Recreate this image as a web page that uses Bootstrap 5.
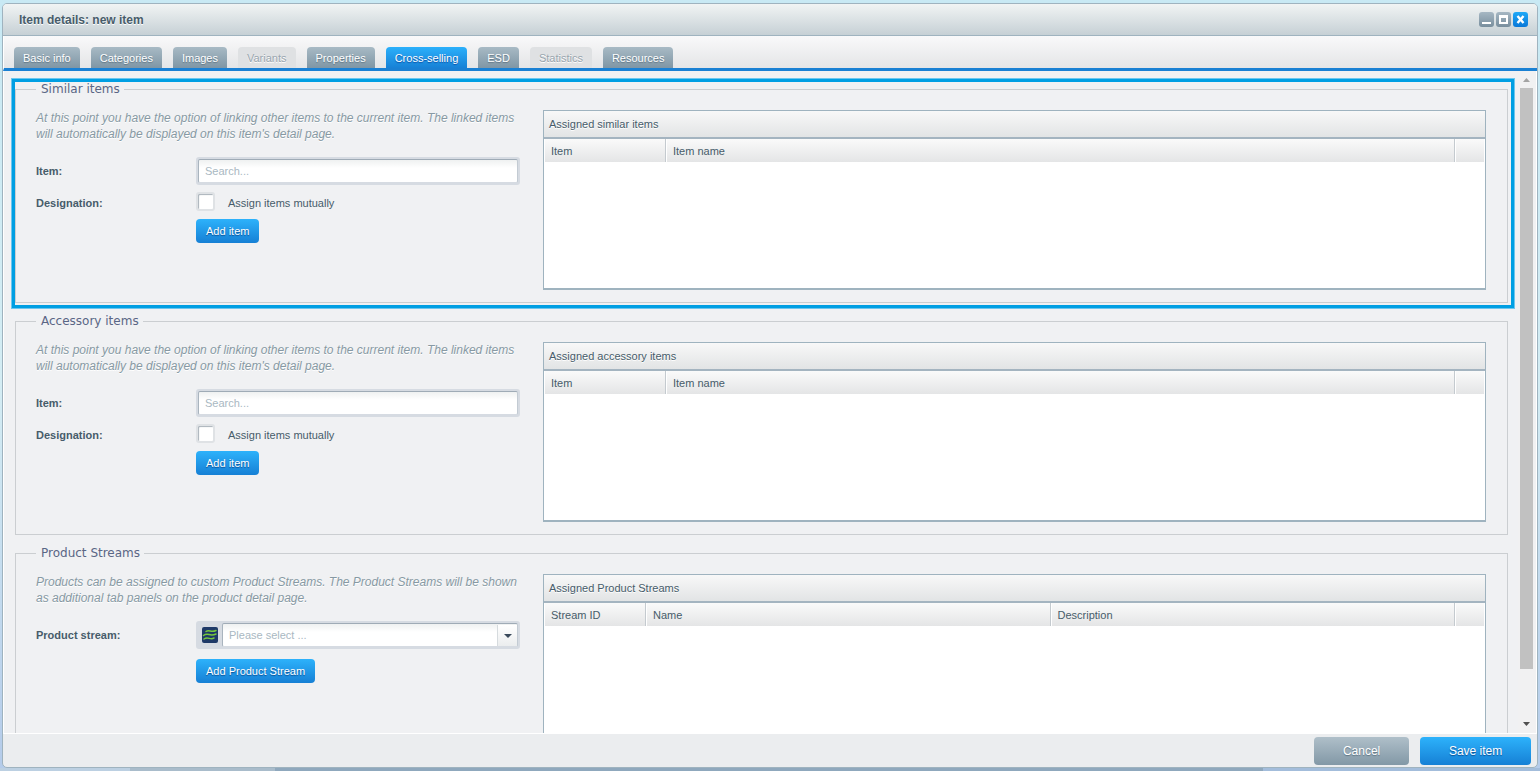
<!DOCTYPE html>
<html lang="en">
<head>
<meta charset="utf-8">
<meta name="viewport" content="width=device-width, initial-scale=1">
<title>Item details: new item</title>
<link rel="stylesheet" href="https://cdn.jsdelivr.net/npm/bootstrap@5.3.0/dist/css/bootstrap.min.css">
<style>
  body {
    font: 11px/16px "Liberation Sans", Arial, sans-serif;
    color: #475c6a;
    background: linear-gradient(#c8e9f4, #d4edf4 50%, #b4cbea);
  }
  .desktop { padding: 3px 2px; background: linear-gradient(90deg, #bcd0e2 130px, #a9bccb 130px 275px, #8fa8bd 275px 82%, #a3bddb 82%) bottom / 100% 3px no-repeat; }
  .win { border: 1px solid #9fb3bf; border-radius: 5px; background: #ebedef; }
  .win-head { height: 32px; padding: 0 9px 0 16px; background: linear-gradient(#f1f4f4, #c6d0d5); border-bottom: 1px solid #9fb3bf; }
  .win-title { font-size: 12px; line-height: 16px; text-shadow: 0 1px 0 #fff; }
  .win-tools { gap: 2px; }
  .win-btn { width: 15px; height: 15px; border: 0; border-radius: 3px; background: linear-gradient(#a6b7c3, #788e9d); }
  .win-btn svg { display: block; width: 15px; height: 15px; }
  .win-btn-close { background: linear-gradient(#1fa9f7, #0a78d8); }
  .tab-strip { height: 35px; gap: 11px; padding: 0 10px; background: linear-gradient(#f9f9fa, #e4e5e7); border-bottom: 3px solid #1a80d3; border-left: 1px solid #fff; }
  .tab-strip .nav-link { height: 21px; padding: 3px 9px 2px; line-height: 16px; border-radius: 4px 4px 0 0; color: #fff; background: linear-gradient(#a8bac5, #7f96a5); text-shadow: 0 1px 1px #5f7584; }
  .tab-strip .nav-link.active { background: linear-gradient(#2bb0fb, #1781d6); text-shadow: 0 1px 1px #0a4fa5; }
  .tab-strip .nav-link.disabled { color: #98a5ae; background: #dfe1e3; text-shadow: 0 1px 0 #fff; }
  .work { background: #f0f1f3; border: 1px solid #fff; border-top: 0; }
  .sections { padding: 10px 10px 0 11px; gap: 10px; }
  .group { border: 1px solid #cbced1; padding: 13px 21px 12px 20px; }
  .group > legend { float: none; width: auto; margin: 0; padding: 0 4px 0 5px; font: 12px/16px "DejaVu Sans", Verdana, sans-serif; color: #5a6685; }
  .group.marked::after { content: ""; position: absolute; inset: -18px -7px -6px -4px; border: 3px solid #009fe3; box-shadow: 0 0 0 1px #6cc6ee; pointer-events: none; }
  .group-body { gap: 23px; }
  .group-form { width: 484px; flex: none; }
  .hint { font-size: 12px; font-style: italic; color: #8799a3; text-shadow: 0 1px 0 #fff; margin-bottom: 15px; }
  .row-tick { margin: 7px 0 8px; }
  .row-stream { margin-bottom: 10px; }
  .field-label { width: 160px; flex: none; font-weight: 700; }
  .field { height: 28px; padding: 2px; border-radius: 3px; background: #d6dbe2; }
  .field input, .field select { height: 24px; border: 1px solid; border-color: #9fabb6 #c3cbd3 #d6dbe2 #a9b4be; border-radius: 2px; padding: 0 6px; background: linear-gradient(#eff1f1, #fff 8px); color: #a9b8c2; line-height: 16px; outline: 0; }
  .field input::placeholder { color: #a9b8c2; }
  .field select { appearance: none; }
  .stream-icon { width: 24px; }
  .drop-arrow { right: 3px; top: 4px; width: 20px; height: 21px; border-left: 1px solid #d6dbde; background: linear-gradient(#fff, #ebedee); pointer-events: none; }
  .tick { appearance: none; width: 19px; height: 19px; margin: 0 13px 0 0; border: 2px solid #dfe2e5; border-radius: 3px; background: #fff; box-shadow: inset 1px 1px 1px #a9b2ba; }
  .act { height: 24px; padding: 0 10px; border: 0; border-radius: 4px; color: #fff; font-size: 11px; line-height: 16px; background: linear-gradient(#2db2fb, #1680d5); text-shadow: 0 1px 1px #0a4f95; }
  .act-large { height: 28px; font-size: 12px; min-width: 95px; }
  .act-save { min-width: 111px; }
  .act-grey { background: linear-gradient(#afbfc9, #8298a6); text-shadow: 0 1px 1px #5f7584; }
  .panel { height: 180px; border: 1px solid #9fb3bf; border-bottom-width: 2px; background: #fff; }
  .panel-title { height: 28px; padding: 5px; line-height: 16px; background: linear-gradient(#f8f8f8, #e2e4e5); border-bottom: 2px solid #a4b4c0; text-shadow: 0 1px 0 #fff; }
  .cols { table-layout: fixed; border-collapse: separate; border-spacing: 0; }
  .cols th { height: 23px; padding: 1px 6px; font-weight: 400; background: linear-gradient(#fafafa, #e4e5e6); border-right: 1px solid #c4cacf; border-left: 1px solid #fff; }
  .cols th:last-child { width: 30px; border-right-color: #fff; }
  .c-item { width: 122px; }
  .c-id { width: 102px; }
  .scroller { width: 18px; padding: 6px 3px 6px 2px; background: #f1f1f2; }
  .scroller svg { width: 9px; height: 5px; flex: none; align-self: center; }
  .thumb { flex: 581 0 0; margin: 6px 0 0; background: #c1c1c1; }
  .track-rest { flex: 53 0 0; }
  .win-foot { height: 33px; padding: 0 6px; gap: 11px; }
</style>
</head>
<body>
<div class="desktop vh-100 d-flex">
<main class="win d-flex flex-column flex-grow-1 overflow-hidden">
  <header class="win-head d-flex align-items-center flex-shrink-0">
    <h1 class="win-title fw-bold m-0 me-auto">Item details: new item</h1>
    <div class="win-tools d-flex">
      <button class="win-btn p-0" type="button" aria-label="Minimize"><svg viewBox="0 0 15 15"><path d="M3 10h9v2H3z" fill="#fff"/></svg></button>
      <button class="win-btn p-0" type="button" aria-label="Maximize"><svg viewBox="0 0 15 15"><path d="M3 3h9v9H3zM5 6v4h5V6z" fill="#fff" fill-rule="evenodd"/></svg></button>
      <button class="win-btn win-btn-close p-0" type="button" aria-label="Close"><svg viewBox="0 0 15 15"><path d="M4.500 4l6 7M10.500 4l-6 7" stroke="#fff" stroke-width="2.400"/></svg></button>
    </div>
  </header>
  <nav class="tab-strip nav flex-nowrap align-items-end flex-shrink-0">
    <a class="nav-link" href="#">Basic info</a>
    <a class="nav-link" href="#">Categories</a>
    <a class="nav-link" href="#">Images</a>
    <a class="nav-link disabled" href="#">Variants</a>
    <a class="nav-link" href="#">Properties</a>
    <a class="nav-link active" href="#">Cross-selling</a>
    <a class="nav-link" href="#">ESD</a>
    <a class="nav-link disabled" href="#">Statistics</a>
    <a class="nav-link" href="#">Resources</a>
  </nav>
  <div class="work d-flex flex-grow-1 overflow-hidden">
    <div class="sections d-flex flex-column flex-grow-1 overflow-hidden">
      <fieldset class="group marked position-relative">
        <legend>Similar items</legend>
        <div class="group-body d-flex">
          <div class="group-form">
            <p class="hint">At this point you have the option of linking other items to the current item. The linked items will automatically be displayed on this item's detail page.</p>
            <div class="d-flex align-items-center">
              <label class="field-label" for="similar-item">Item:</label>
              <div class="field flex-grow-1"><input class="w-100" id="similar-item" type="text" placeholder="Search..."></div>
            </div>
            <div class="row-tick d-flex align-items-end">
              <span class="field-label">Designation:</span>
              <input class="tick" id="similar-mutual" type="checkbox"><label for="similar-mutual">Assign items mutually</label>
            </div>
            <div class="d-flex"><span class="field-label"></span><button class="act" type="button">Add item</button></div>
          </div>
          <section class="panel flex-grow-1">
            <div class="panel-title">Assigned similar items</div>
            <table class="cols w-100"><thead><tr><th class="c-item">Item</th><th>Item name</th><th></th></tr></thead></table>
          </section>
        </div>
      </fieldset>
      <fieldset class="group">
        <legend>Accessory items</legend>
        <div class="group-body d-flex">
          <div class="group-form">
            <p class="hint">At this point you have the option of linking other items to the current item. The linked items will automatically be displayed on this item's detail page.</p>
            <div class="d-flex align-items-center">
              <label class="field-label" for="accessory-item">Item:</label>
              <div class="field flex-grow-1"><input class="w-100" id="accessory-item" type="text" placeholder="Search..."></div>
            </div>
            <div class="row-tick d-flex align-items-end">
              <span class="field-label">Designation:</span>
              <input class="tick" id="accessory-mutual" type="checkbox"><label for="accessory-mutual">Assign items mutually</label>
            </div>
            <div class="d-flex"><span class="field-label"></span><button class="act" type="button">Add item</button></div>
          </div>
          <section class="panel flex-grow-1">
            <div class="panel-title">Assigned accessory items</div>
            <table class="cols w-100"><thead><tr><th class="c-item">Item</th><th>Item name</th><th></th></tr></thead></table>
          </section>
        </div>
      </fieldset>
      <fieldset class="group">
        <legend>Product Streams</legend>
        <div class="group-body d-flex">
          <div class="group-form">
            <p class="hint">Products can be assigned to custom Product Streams. The Product Streams will be shown as additional tab panels on the product detail page.</p>
            <div class="row-stream d-flex align-items-center">
              <label class="field-label" for="stream">Product stream:</label>
              <div class="field flex-grow-1 d-flex position-relative">
                <svg class="stream-icon flex-shrink-0" viewBox="0 0 24 24" aria-hidden="true"><rect x="4" y="4" width="16" height="16" rx="2" fill="#1f3a68"/><g fill="none" stroke="#76c83e" stroke-width="1.500" stroke-linecap="round"><path d="M8 8.500c3-2.500 5 1.500 10-1"/><path d="M5.500 12.500c4.500-3.500 6 1.500 12.500-1.500"/><path d="M6 16c4-3 6 1.500 10-1"/></g></svg>
                <select class="flex-grow-1" id="stream"><option>Please select ...</option></select>
                <span class="drop-arrow position-absolute d-flex align-items-center justify-content-center"><svg width="8" height="4" viewBox="0 0 8 4"><path d="M0 0h8L4 4z" fill="#39495a"/></svg></span>
              </div>
            </div>
            <div class="d-flex"><span class="field-label"></span><button class="act" type="button">Add Product Stream</button></div>
          </div>
          <section class="panel flex-grow-1">
            <div class="panel-title">Assigned Product Streams</div>
            <table class="cols w-100"><thead><tr><th class="c-id">Stream ID</th><th>Name</th><th>Description</th><th></th></tr></thead></table>
          </section>
        </div>
      </fieldset>
    </div>
    <div class="scroller d-flex flex-column flex-shrink-0" aria-hidden="true">
      <svg viewBox="0 0 9 5"><path d="M1 5l3.500-4L8 5z" fill="#a3a3a3"/></svg>
      <div class="thumb"></div>
      <div class="track-rest"></div>
      <svg viewBox="0 0 9 5"><path d="M1 0l3.500 4L8 0z" fill="#505050"/></svg>
    </div>
  </div>
  <footer class="win-foot d-flex align-items-center justify-content-end flex-shrink-0">
    <button class="act act-large act-grey" type="button">Cancel</button>
    <button class="act act-large act-save" type="button">Save item</button>
  </footer>
</main>
</div>
<script src="https://cdn.jsdelivr.net/npm/bootstrap@5.3.0/dist/js/bootstrap.bundle.min.js"></script>
</body>
</html>
